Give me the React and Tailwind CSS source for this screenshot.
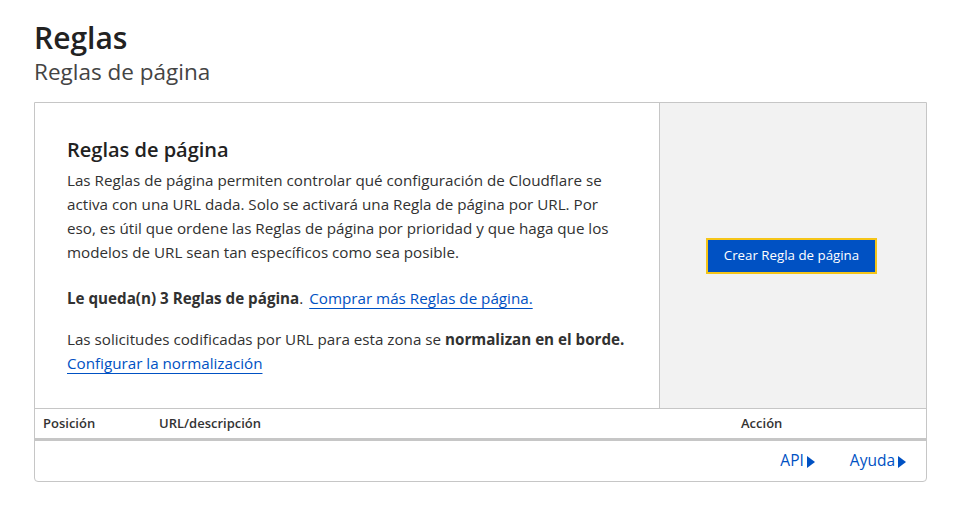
import React from "react";

function Tri() {
  return (
    <svg width="8" height="12" viewBox="0 0 8 12" className="inline-block ml-[3px] mb-[1px]">
      <path d="M0 0 L8 6 L0 12 Z" fill="#0051c3" />
    </svg>
  );
}

export default function App() {
  return (
    <div className="w-[954px] h-[509px] bg-white text-[#313131]" style={{ fontFamily: '"Open Sans", "Noto Sans", sans-serif' }}>
      <div className="pl-[34px] pr-[27px] pt-[18px]">
        <h1 className="text-[30px] leading-[40px] font-semibold text-[#222]">Reglas</h1>
        <h2 className="text-[22.5px] leading-[32px] text-[#444] mt-[-2px]">Reglas de página</h2>
        <div className="mt-[14px] border border-[#c6c6c6] rounded-b-[4px]">
          <div className="flex h-[305px]">
            <div className="flex-1 pl-[32px] pr-[30px] pt-[33px]">
              <h3 className="text-[20px] leading-[28px] font-semibold text-[#222]">Reglas de página</h3>
              <p className="text-[15.2px] leading-[24px] mt-[4px]">
                Las Reglas de página permiten controlar qué configuración de Cloudflare se activa con una URL dada. Solo se activará una Regla de página por URL. Por eso, es útil que ordene las Reglas de página por prioridad y que haga que los modelos de URL sean tan específicos como sea posible.
              </p>
              <p className="text-[15.2px] leading-[24px] mt-[22px]">
                <span className="font-bold">Le queda(n) 3 Reglas de página</span>.{" "}
                <a className="text-[#0051c3] underline underline-offset-[4px] decoration-1 ml-[2px]">Comprar más Reglas de página.</a>
              </p>
              <p className="text-[15.2px] leading-[24px] mt-[17px]">
                Las solicitudes codificadas por URL para esta zona se <span className="font-bold">normalizan en el borde.</span>
                <br />
                <a className="text-[#0051c3] underline underline-offset-[4px] decoration-1">Configurar la normalización</a>
              </p>
            </div>
            <div className="w-[267px] bg-[#f2f2f2] border-l border-[#c6c6c6] flex items-center justify-center">
              <button className="h-[36px] px-[16px] bg-[#0051c3] text-white text-[13.3px] border-2 border-[#f5c518] mt-[1px] ml-[-3px]">
                Crear Regla de página
              </button>
            </div>
          </div>
          <div className="flex h-[33px] items-center border-t border-b-[3px] border-[#c6c6c6] text-[13px] font-semibold text-[#333]">
            <div className="w-[124px] pl-[8px]">Posición</div>
            <div className="flex-1">URL/descripción</div>
            <div className="w-[185px]">Acción</div>
          </div>
          <div className="h-[40px] flex items-center justify-end gap-[35px] pr-[20px] text-[15.5px] text-[#0051c3]">
            <span>API<Tri /></span>
            <span>Ayuda<Tri /></span>
          </div>
        </div>
      </div>
    </div>
  );
}
